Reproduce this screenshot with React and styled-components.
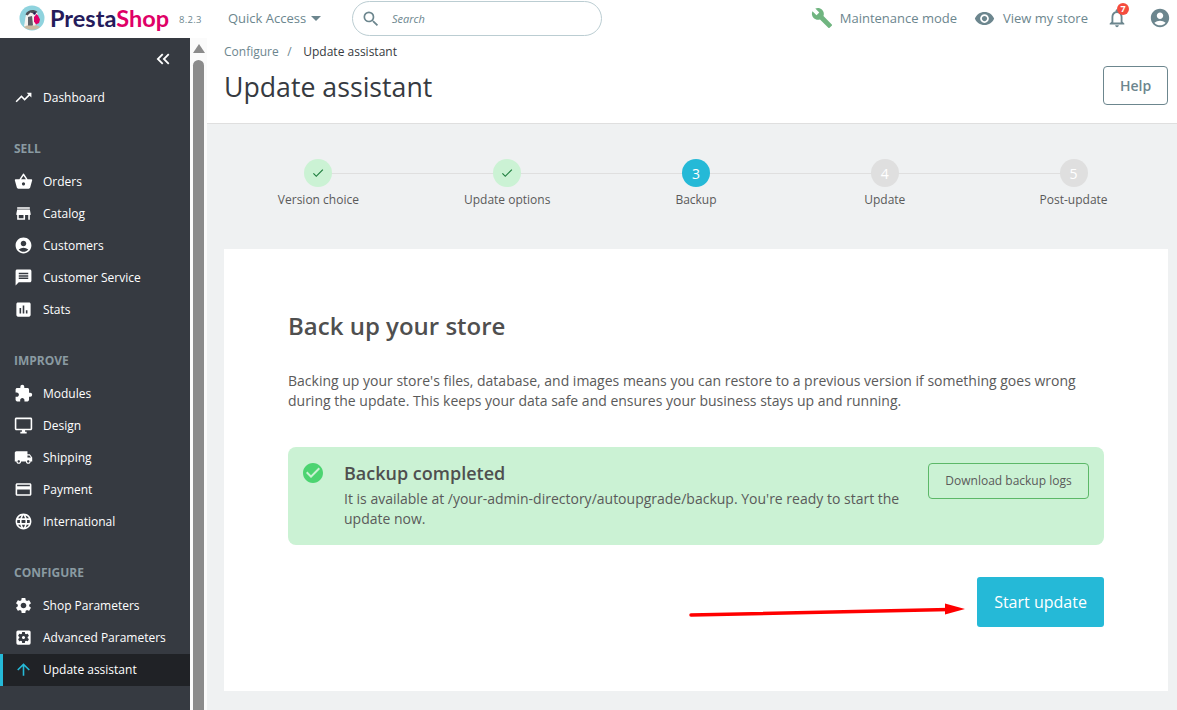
import styled, { createGlobalStyle } from 'styled-components'
import {
  MdAccountCircle,
  MdArrowUpward,
  MdAssessment,
  MdBuild,
  MdCheck,
  MdCheckCircle,
  MdExtension,
  MdKeyboardDoubleArrowLeft,
  MdLanguage,
  MdLocalShipping,
  MdMessage,
  MdNotificationsNone,
  MdOutlineCreditCard,
  MdOutlineDesktopWindows,
  MdRemoveRedEye,
  MdSearch,
  MdSettings,
  MdSettingsApplications,
  MdShoppingBasket,
  MdStore,
  MdTrendingUp,
} from 'react-icons/md'

const GlobalStyle = createGlobalStyle`
  html, body {
    margin: 0;
    padding: 0;
    height: 100%;
    overflow: hidden;
  }
  body {
    font-family: 'Open Sans', 'Liberation Sans', sans-serif;
    color: #363a41;
  }
  * { box-sizing: border-box; }
`

const Page = styled.div`
  display: flex;
  flex-direction: column;
  height: 100vh;
  overflow: hidden;
  background: #fff;
`

const TopBar = styled.header`
  flex: 0 0 38px;
  display: flex;
  align-items: center;
  padding: 0 6px 2px 19px;
  background: #fff;
`

const Brand = styled.div`
  display: flex;
  align-items: center;
  width: 209px;
`

const BrandName = styled.span`
  margin-left: 5px;
  font-family: Lato, sans-serif;
  font-size: 23.5px;
  font-weight: 700;
  color: #251b5b;

  b {
    font-weight: 700;
    color: #df0067;
  }
`

const Version = styled.span`
  margin-left: 10px;
  margin-top: 3px;
  font-size: 9.5px;
  letter-spacing: 0.3px;
  color: #6c868e;
`

const QuickAccess = styled.div`
  display: flex;
  align-items: center;
  width: 124px;
  font-size: 13px;
  color: #6c868e;

  &:after {
    content: '';
    margin-left: 5px;
    border-left: 5px solid transparent;
    border-right: 5px solid transparent;
    border-top: 5px solid #6c868e;
  }
`

const Search = styled.div`
  display: flex;
  align-items: center;
  gap: 11px;
  width: 250px;
  height: 35px;
  margin-top: 1px;
  padding-left: 8px;
  border: 1px solid #bbcdd2;
  border-radius: 18px;
  font-size: 11px;
  font-style: italic;
  color: #6c868e;
`

const TopActions = styled.div`
  display: flex;
  align-items: center;
  margin-left: auto;
`

const TopLink = styled.div`
  display: flex;
  align-items: center;
  gap: ${(p) => p.$gap}px;
  margin-right: ${(p) => p.$space}px;
  font-size: 13px;
  color: #6c868e;
`

const Bell = styled.div`
  position: relative;
  display: flex;
  margin-right: 21px;
  color: #6c868e;
`

const BellCount = styled.span`
  position: absolute;
  top: -4px;
  right: -1px;
  width: 12px;
  height: 12px;
  border-radius: 50%;
  background: #f54c3e;
  color: #fff;
  font-size: 9px;
  font-weight: 700;
  line-height: 12px;
  text-align: center;
`

const Body = styled.div`
  flex: 1;
  display: flex;
  min-height: 0;
`

const Sidebar = styled.nav`
  flex: 0 0 190px;
  background: #363a41;
  color: #fff;
`

const CollapseRow = styled.div`
  display: flex;
  justify-content: flex-end;
  height: 43px;
  padding: 10px 16px 0 0;
  font-size: 22px;
`

const SectionTitle = styled.div`
  height: 32px;
  margin-top: 20px;
  padding-left: 14px;
  font-size: 12px;
  font-weight: 700;
  line-height: 32px;
  color: #8a9aa2;
`

const NavItem = styled.div`
  display: flex;
  align-items: center;
  height: 32px;
  margin-top: ${(p) => (p.$active ? 1 : 0)}px;
  padding-bottom: ${(p) => (p.$active ? 2 : 0)}px;
  padding-left: ${(p) => (p.$active ? 11 : 14)}px;
  border-left: ${(p) => (p.$active ? '3px solid #25b9d7' : 'none')};
  background: ${(p) => (p.$active ? '#202226' : 'transparent')};
  font-size: 12px;
  color: #fff;

  svg {
    flex: 0 0 19px;
    margin-right: 10px;
    color: ${(p) => (p.$active ? '#25b9d7' : '#fff')};
  }
`

const ScrollTrack = styled.div`
  flex: 0 0 17px;
  display: flex;
  flex-direction: column;
  align-items: center;
  padding-top: 6px;
  background: #fbfbfb;
`

const ScrollArrow = styled.div`
  border-left: 6.5px solid transparent;
  border-right: 6.5px solid transparent;
  border-bottom: 9px solid #8b8b8b;
`

const ScrollThumb = styled.div`
  flex: 1;
  width: 11px;
  margin-top: 7px;
  border-radius: 6px 6px 0 0;
  background: #8b8b8b;
`

const Main = styled.main`
  flex: 1;
  position: relative;
  min-width: 0;
  display: flex;
  flex-direction: column;
  background: #eff1f2;
`

const PageHead = styled.div`
  flex: 0 0 86px;
  display: flex;
  justify-content: space-between;
  padding: 0 9px 0 17px;
  background: #fff;
  border-bottom: 1px solid #dfdfdf;
`

const Breadcrumb = styled.div`
  height: 27px;
  padding-top: 5px;
  font-size: 12px;
  line-height: 17px;
  color: #6c868e;

  i {
    margin: 0 8.5px;
    font-style: normal;
  }

  b {
    font-weight: 400;
    color: #363a41;
  }
`

const PageTitle = styled.h1`
  margin: 0;
  font-size: 26.7px;
  font-weight: 400;
  line-height: 43px;
  color: #363a41;
`

const HelpButton = styled.button`
  align-self: flex-start;
  width: 65px;
  height: 39px;
  margin-top: 28px;
  border: 1px solid #6c868e;
  border-radius: 4px;
  background: #fff;
  font-family: inherit;
  font-size: 14px;
  font-weight: 600;
  color: #6c868e;
`

const Stepper = styled.ol`
  display: grid;
  grid-template-columns: repeat(5, 1fr);
  height: 125px;
  margin: 0;
  padding: 35px 9px 0 17px;
  list-style: none;
`

const Step = styled.li`
  position: relative;
  display: flex;
  flex-direction: column;
  align-items: center;
  gap: 4px;
  font-size: 12px;
  line-height: 17px;
  color: #5a5a5a;

  &:not(:last-child):after {
    content: '';
    position: absolute;
    top: 13.5px;
    left: 50%;
    width: 100%;
    height: 1px;
    background: #dfdfdf;
  }
`

const stepColors = {
  done: ['#cbf2d4', '#1e7e3e'],
  current: ['#25b9d7', '#fff'],
  todo: ['#dfdfdf', '#fff'],
}

const StepDot = styled.span`
  position: relative;
  z-index: 1;
  display: flex;
  align-items: center;
  justify-content: center;
  width: 28px;
  height: 28px;
  border-radius: 50%;
  background: ${(p) => stepColors[p.$state][0]};
  color: ${(p) => stepColors[p.$state][1]};
  font-size: 14px;
`

const Card = styled.section`
  height: 442px;
  margin: 0 9px 0 17px;
  padding: 59px 64px 0;
  background: #fff;
`

const CardTitle = styled.h2`
  margin: 0 0 27px;
  font-size: 24px;
  font-weight: 600;
  line-height: 36px;
  color: #4f4f4f;
`

const Lead = styled.p`
  margin: 0 0 36px;
  font-size: 14px;
  line-height: 20px;
  color: #5a5a5a;
`

const Alert = styled.div`
  display: flex;
  align-items: flex-start;
  height: 98px;
  padding: 14px 15px;
  border-radius: 8px;
  background: #cbf2d4;
  color: #5a5a5a;
`

const AlertIcon = styled.div`
  flex: 0 0 43px;
  display: flex;
  margin-left: -2px;
  color: #4cd471;
`

const AlertBody = styled.div`
  flex: 1;
  padding-right: 20px;
`

const AlertTitle = styled.div`
  font-size: 18px;
  font-weight: 600;
  line-height: 24px;
  color: #4f4f4f;
`

const AlertText = styled.div`
  margin-top: 4px;
  font-size: 14px;
  line-height: 20px;
`

const LogsButton = styled.button`
  flex: 0 0 161px;
  height: 36px;
  margin-top: 2px;
  padding: 0 0 2px;
  border: 1px solid #5cb868;
  border-radius: 4px;
  background: transparent;
  font-family: inherit;
  font-size: 12px;
  color: #5a5a5a;
`

const CardFooter = styled.div`
  display: flex;
  justify-content: flex-end;
  margin-top: 32px;
`

const StartButton = styled.button`
  width: 127px;
  height: 50px;
  border: 0;
  border-radius: 3px;
  background: #25b9d7;
  font-family: inherit;
  font-size: 16px;
  color: #fff;
`

const RedArrow = styled.svg`
  position: absolute;
  left: 480px;
  top: 560px;
`

const Puffin = () => (
  <svg width="26" height="26" viewBox="0 0 26 26">
    <circle cx="13" cy="13" r="12.5" fill="#8fd3de" />
    <path d="M5 21c1-4 1-8 2-11 1-4 8-6 11-3l1 4-2 8-2 4H8z" fill="#f4f2ee" />
    <path d="M6.5 9.5C8 5 15 3.5 18.5 7l-3 2-4-1.5-3 3z" fill="#4c4f55" />
    <path d="M9 12l4-1 1 9-2 3-3-1z" fill="#5d6168" />
    <path d="M15 12l2.500-3 1.500 1.500 2 4-1 3.500-3 1.500-2-3z" fill="#df0067" />
    <circle cx="15.500" cy="8.500" r="1.200" fill="#251b5b" />
    <path d="M5 22c4 3.500 12 3.500 16 0l-3-1.500H8z" fill="#c9b9a0" />
  </svg>
)

const sections = [
  {
    title: 'SELL',
    items: [
      ['Orders', MdShoppingBasket],
      ['Catalog', MdStore],
      ['Customers', MdAccountCircle],
      ['Customer Service', MdMessage],
      ['Stats', MdAssessment],
    ],
  },
  {
    title: 'IMPROVE',
    items: [
      ['Modules', MdExtension],
      ['Design', MdOutlineDesktopWindows],
      ['Shipping', MdLocalShipping],
      ['Payment', MdOutlineCreditCard],
      ['International', MdLanguage],
    ],
  },
  {
    title: 'CONFIGURE',
    items: [
      ['Shop Parameters', MdSettings],
      ['Advanced Parameters', MdSettingsApplications],
      ['Update assistant', MdArrowUpward, true],
    ],
  },
]

const steps = [
  ['Version choice', 'done'],
  ['Update options', 'done'],
  ['Backup', 'current', 3],
  ['Update', 'todo', 4],
  ['Post-update', 'todo', 5],
]

const App = () => (
  <Page>
    <GlobalStyle />
    <TopBar>
      <Brand>
        <Puffin />
        <BrandName>
          Presta<b>Shop</b>
        </BrandName>
        <Version>8.2.3</Version>
      </Brand>
      <QuickAccess>Quick Access</QuickAccess>
      <Search>
        <MdSearch size={20} />
        Search
      </Search>
      <TopActions>
        <TopLink $gap={7} $space={17}>
          <MdBuild size={22} color="#70b580" />
          Maintenance mode
        </TopLink>
        <TopLink $gap={8} $space={18}>
          <MdRemoveRedEye size={21} />
          View my store
        </TopLink>
        <Bell>
          <MdNotificationsNone size={22} />
          <BellCount>7</BellCount>
        </Bell>
        <MdAccountCircle size={22} color="#6c868e" />
      </TopActions>
    </TopBar>
    <Body>
      <Sidebar>
        <CollapseRow>
          <MdKeyboardDoubleArrowLeft />
        </CollapseRow>
        <NavItem>
          <MdTrendingUp size={19} />
          Dashboard
        </NavItem>
        {sections.map((section) => (
          <div key={section.title}>
            <SectionTitle>{section.title}</SectionTitle>
            {section.items.map(([label, Icon, active]) => (
              <NavItem key={label} $active={active}>
                <Icon size={19} />
                {label}
              </NavItem>
            ))}
          </div>
        ))}
      </Sidebar>
      <ScrollTrack>
        <ScrollArrow />
        <ScrollThumb />
      </ScrollTrack>
      <Main>
        <PageHead>
          <div>
            <Breadcrumb>
              Configure<i>/</i> <b>Update assistant</b>
            </Breadcrumb>
            <PageTitle>Update assistant</PageTitle>
          </div>
          <HelpButton>Help</HelpButton>
        </PageHead>
        <Stepper>
          {steps.map(([label, state, number]) => (
            <Step key={label}>
              <StepDot $state={state}>{number || <MdCheck size={14} />}</StepDot>
              {label}
            </Step>
          ))}
        </Stepper>
        <Card>
          <CardTitle>Back up your store</CardTitle>
          <Lead>
            Backing up your store's files, database, and images means you can restore to a previous
            version if something goes wrong during the update. This keeps your data safe and ensures
            your business stays up and running.
          </Lead>
          <Alert>
            <AlertIcon>
              <MdCheckCircle size={24} />
            </AlertIcon>
            <AlertBody>
              <AlertTitle>Backup completed</AlertTitle>
              <AlertText>
                It is available at /your-admin-directory/autoupgrade/backup. You're ready to start the
                update now.
              </AlertText>
            </AlertBody>
            <LogsButton>Download backup logs</LogsButton>
          </Alert>
          <CardFooter>
            <StartButton>Start update</StartButton>
          </CardFooter>
        </Card>
        <RedArrow width="290" height="20" viewBox="0 0 290 20">
          <path d="M4 17L262 11.500" stroke="#f00" strokeWidth="3.500" strokeLinecap="round" />
          <path d="M258 5.500l20 5.500-20 5.500z" fill="#f00" />
        </RedArrow>
      </Main>
    </Body>
  </Page>
)

export default App
